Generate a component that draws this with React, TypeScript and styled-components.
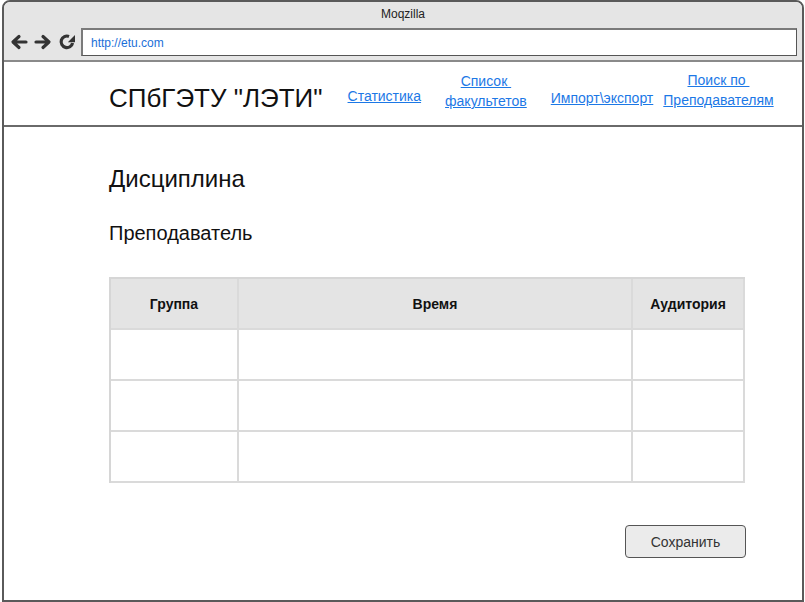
import React from "react";
import styled, { createGlobalStyle } from "styled-components";

const Global = createGlobalStyle`
  html, body { margin: 0; padding: 0; background: #fff; }
  body { font-family: "Liberation Sans", Arial, sans-serif; }
  * { box-sizing: border-box; }
`;

const Page = styled.div`
  width: 805px;
  height: 602px;
  padding-left: 2px;
`;

const Window = styled.div`
  width: 802px;
  height: 602px;
  border: 2px solid #5a5a5a;
  border-radius: 8px 8px 0 0;
  display: flex;
  flex-direction: column;
  overflow: hidden;
`;

const TitleBar = styled.div`
  background: #e5e5e5;
  height: 60px;
  border-bottom: 2px solid #8a8a8a;
  display: flex;
  flex-direction: column;
`;

const Caption = styled.div`
  text-align: center;
  font-size: 12px;
  color: #222;
  line-height: 14px;
  padding-top: 5px;
  height: 26px;
`;

const NavRow = styled.div`
  display: flex;
  align-items: center;
  padding-left: 3px;
  padding-right: 5px;
`;

const IconBox = styled.div`
  width: 24px;
  height: 22px;
  display: flex;
  align-items: center;
  justify-content: center;
`;

const Address = styled.div`
  margin-left: 2px;
  flex: 1;
  height: 28px;
  background: #fff;
  border: 1px solid #555;
  border-top: 2px solid #7a7a7a;
  border-left: 2px solid #7a7a7a;
  font-size: 12px;
  color: #1a6fd8;
  display: flex;
  align-items: center;
  padding-left: 8px;
`;

const Header = styled.div`
  height: 65px;
  border-bottom: 2px solid #6a6a6a;
  display: flex;
  align-items: flex-start;
  padding-left: 105px;
`;

const Brand = styled.div`
  font-size: 26px;
  line-height: 30px;
  color: #111;
  margin-top: 21px;
  white-space: nowrap;
`;

const NavLink = styled.a<{ $top: number; $left: number }>`
  font-size: 14px;
  line-height: 20px;
  color: #1c78e6;
  text-decoration: underline;
  text-align: center;
  margin-top: ${(p) => p.$top}px;
  margin-left: ${(p) => p.$left}px;
  white-space: pre;
  cursor: pointer;
`;

const Content = styled.div`
  flex: 1;
  padding: 38px 56px 0 105px;
  display: flex;
  flex-direction: column;
`;

const Heading = styled.div`
  font-size: 24px;
  line-height: 28px;
  color: #111;
`;

const SubHeading = styled.div`
  font-size: 20px;
  line-height: 24px;
  color: #111;
  margin-top: 28px;
`;

const Table = styled.div`
  margin-top: 32px;
  display: grid;
  grid-template-columns: 128px 394px 112px;
  grid-auto-rows: 51px;
  border-top: 2px solid #d6d6d6;
  border-left: 2px solid #d6d6d6;
  width: 636px;
`;

const Cell = styled.div<{ $head?: boolean }>`
  border-right: 2px solid #dadada;
  border-bottom: 2px solid #dadada;
  background: ${(p) => (p.$head ? "#e4e4e4" : "#fff")};
  font-size: 14px;
  font-weight: bold;
  color: #111;
  display: flex;
  align-items: center;
  justify-content: center;
`;

const Footer = styled.div`
  display: flex;
  justify-content: flex-end;
  margin-top: 42px;
`;

const Button = styled.button`
  width: 121px;
  height: 33px;
  border: 1px solid #555;
  border-radius: 4px;
  background: #ebebeb;
  font-family: "Liberation Sans", Arial, sans-serif;
  font-size: 14px;
  color: #333;
`;

const BackIcon = () => (
  <svg width="18" height="16" viewBox="0 0 18 16">
    <path d="M16 8H4M9 2.5L3 8l6 5.5" stroke="#333" strokeWidth="3.2" fill="none" strokeLinecap="round" strokeLinejoin="round" />
  </svg>
);
const ForwardIcon = () => (
  <svg width="18" height="16" viewBox="0 0 18 16">
    <path d="M2 8h12M9 2.5L15 8l-6 5.5" stroke="#333" strokeWidth="3.2" fill="none" strokeLinecap="round" strokeLinejoin="round" />
  </svg>
);
const ReloadIcon = () => (
  <svg width="18" height="18" viewBox="0 0 18 18">
    <path d="M11 3.4A5.8 5.8 0 1 0 14.6 10" stroke="#333" strokeWidth="3.2" fill="none" />
    <path d="M9.8 9.2L17 9.2 17 2z" fill="#333" />
  </svg>
);

const rows = [0, 1, 2];

export default function App() {
  return (
    <Page>
      <Global />
      <Window>
        <TitleBar>
          <Caption>Moqzilla</Caption>
          <NavRow>
            <IconBox><BackIcon /></IconBox>
            <IconBox><ForwardIcon /></IconBox>
            <IconBox><ReloadIcon /></IconBox>
            <Address>http://etu.com</Address>
          </NavRow>
        </TitleBar>
        <Header>
          <Brand>СПбГЭТУ "ЛЭТИ"</Brand>
          <NavLink $top={24} $left={25}>Статистика</NavLink>
          <NavLink $top={9} $left={24}>{"Список \nфакультетов"}</NavLink>
          <NavLink $top={26} $left={24}>Импорт\экспорт</NavLink>
          <NavLink $top={8} $left={10}>{"Поиск по \nПреподавателям"}</NavLink>
        </Header>
        <Content>
          <Heading>Дисциплина</Heading>
          <SubHeading>Преподаватель</SubHeading>
          <Table>
            <Cell $head>Группа</Cell>
            <Cell $head>Время</Cell>
            <Cell $head>Аудитория</Cell>
            {rows.map((r) => (
              <React.Fragment key={r}>
                <Cell />
                <Cell />
                <Cell />
              </React.Fragment>
            ))}
          </Table>
          <Footer>
            <Button>Сохранить</Button>
          </Footer>
        </Content>
      </Window>
    </Page>
  );
}
